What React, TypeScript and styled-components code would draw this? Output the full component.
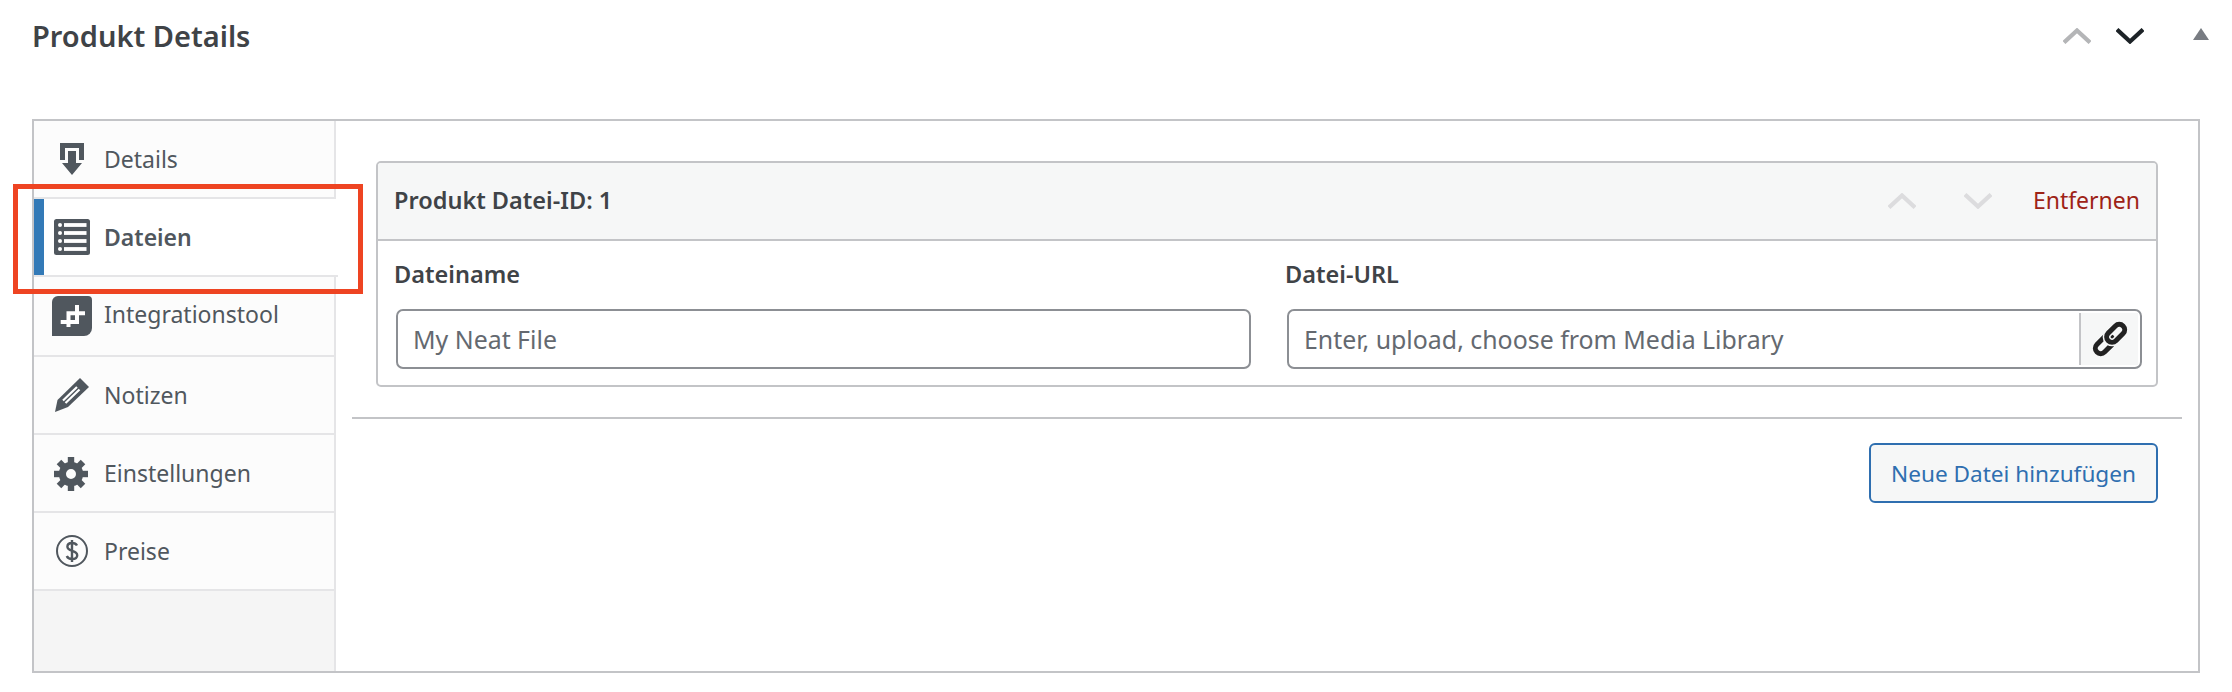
import React from "react";
import styled, { createGlobalStyle } from "styled-components";

const Global = createGlobalStyle`
  * { box-sizing: border-box; }
  html, body { margin: 0; padding: 0; background: #fff; }
  body { font-family: "Noto Sans", "Open Sans", sans-serif; }
`;

const Page = styled.div`
  position: relative;
  width: 2232px;
  height: 692px;
  padding: 0 32px;
  overflow: hidden;
`;

const TitleBar = styled.header`
  display: flex;
  align-items: center;
  height: 119px;
  padding-bottom: 47px;
  margin-right: -9px;
`;

const Title = styled.h2`
  flex: 1;
  margin: 0;
  font-size: 29px;
  font-weight: 600;
  color: #3f4347;
  line-height: 72px;
`;

const ChevronSvg = styled.svg<{ $tone: string }>`
  display: block;
  width: 28px;
  height: 16px;
  fill: none;
  stroke: ${(p) => p.$tone};
  stroke-width: 4.2;
`;

const Chevron = ({ up, tone }: { up?: boolean; tone: string }) => (
  <ChevronSvg $tone={tone} viewBox="0 0 28 16">
    <polyline points={up ? "1,14.5 14,2.5 27,14.5" : "1,1.5 14,13.5 27,1.5"} />
  </ChevronSvg>
);

const TitleControls = styled.div`
  display: flex;
  align-items: flex-start;
  gap: 25px;
`;

const Triangle = styled.span`
  display: block;
  width: 0;
  height: 0;
  margin-left: 24px;
  border-left: 8px solid transparent;
  border-right: 8px solid transparent;
  border-bottom: 12px solid #787c82;
`;

const Box = styled.section`
  display: flex;
  height: 554px;
  border: 2px solid #c3c4c7;
`;

const Sidebar = styled.nav`
  flex: 0 0 302px;
  min-width: 0;
  margin: 0;
  background: #f5f5f5;
  border-right: 2px solid #e5e5e7;
`;

const Tab = styled.div<{ $active?: boolean; $tall?: boolean }>`
  position: relative;
  display: flex;
  align-items: center;
  height: ${(p) => (p.$tall ? 80 : 78)}px;
  width: ${(p) => (p.$active ? 304 : 300)}px;
  padding-left: 16px;
  gap: 10px;
  background: ${(p) => (p.$active ? "#fff" : "#fcfcfc")};
  border-bottom: 2px solid #e5e5e7;
  font-size: 23px;
  font-weight: ${(p) => (p.$active ? 600 : 400)};
  color: #50575e;
  &::before {
    content: "";
    display: ${(p) => (p.$active ? "block" : "none")};
    position: absolute;
    left: 0;
    top: 0;
    bottom: 0;
    width: 10px;
    background: #337ab7;
  }
`;

const TabLabel = styled.span<{ $lift?: boolean }>`
  margin-bottom: ${(p) => (p.$lift ? 5 : 0)}px;
`;

const IconSvg = styled.svg`
  display: block;
  flex: none;
  width: 44px;
  height: 44px;
  fill: #50575e;
`;

const DetailsIcon = () => (
  <IconSvg viewBox="0 0 44 44">
    <path d="M10 6H34V23H29V11H15V23H10Z" />
    <path d="M18 14H26V26H32L22 38L12 26H18Z" />
  </IconSvg>
);

const FilesIcon = () => (
  <IconSvg viewBox="0 0 44 44">
    <rect x="4" y="4" width="36" height="36" rx="2.5" />
    {[10, 18, 26, 34].map((y) => (
      <g key={y} fill="#fff">
        <circle cx="10" cy={y} r="2" />
        <rect x="14" y={y - 1.9} width="22.5" height="3.8" />
      </g>
    ))}
  </IconSvg>
);

const IntegrationIcon = () => (
  <IconSvg viewBox="0 0 44 44">
    <path d="M8 2H38A4 4 0 0 1 42 6V34A8 8 0 0 1 34 42H2V8A6 6 0 0 1 8 2Z" />
    <path
      d="M10.7 28H29M18.5 17.5V33M16.5 19.3H35M27 11V30"
      fill="none"
      stroke="#fff"
      strokeWidth="4"
    />
  </IconSvg>
);

const PencilIcon = () => (
  <IconSvg viewBox="0 0 44 44">
    <path d="M5 39L7.5 27L30 5L39 14L18 34Z" />
    <path
      d="M13 27.5L27 14M15.5 30L29.5 16.5"
      fill="none"
      stroke="#fff"
      strokeWidth="2.2"
    />
  </IconSvg>
);

const GearIcon = () => (
  <IconSvg viewBox="0 0 44 44">
    <circle cx="21" cy="23" r="8.6" fill="none" stroke="#50575e" strokeWidth="7.2" />
    {[0, 45, 90, 135, 180, 225, 270, 315].map((a) => (
      <rect key={a} x="17.8" y="6" width="6.4" height="7" transform={`rotate(${a} 21 23)`} />
    ))}
  </IconSvg>
);

const DollarIcon = () => (
  <IconSvg viewBox="0 0 44 44">
    <circle cx="22" cy="22" r="15" fill="none" stroke="#50575e" strokeWidth="2" />
    <path
      d="M27 16.5C26 14.6 24.2 14 22 14C19.2 14 17.4 15.6 17.4 17.8C17.4 23 27.2 20.8 27.2 26.2C27.2 28.6 25 30 22 30C19.4 30 17.6 29 16.8 27M22 11V33"
      fill="none"
      stroke="#50575e"
      strokeWidth="2.4"
    />
  </IconSvg>
);

const Main = styled.main`
  flex: 1;
  min-width: 0;
  display: flex;
  flex-direction: column;
  padding: 40px 16px 0;
`;

const Panel = styled.div`
  margin: 0 24px;
  height: 226px;
  border: 2px solid #c3c4c7;
  border-radius: 5px;
  overflow: hidden;
`;

const PanelHeader = styled.div`
  display: flex;
  align-items: center;
  height: 78px;
  padding: 0 16px;
  background: #f6f7f7;
  border-bottom: 2px solid #c3c4c7;
`;

const PanelTitle = styled.div`
  flex: 1;
  font-size: 23.5px;
  font-weight: 600;
  color: #3f4347;
  margin-bottom: 2px;
`;

const PanelControls = styled.div`
  display: flex;
  align-items: center;
  gap: 48px;
  margin-right: 41px;
`;

const RemoveLink = styled.a`
  font-size: 23px;
  color: #9e2316;
  margin-bottom: 2px;
`;

const Fields = styled.div`
  display: grid;
  grid-template-columns: 856px 856px;
  gap: 35px;
  padding: 16px 14px 0 17px;
`;

const Field = styled.div`
  display: flex;
  flex-direction: column;
`;

const FieldLabel = styled.label`
  height: 52px;
  margin-left: -1px;
  font-size: 23.5px;
  font-weight: 600;
  line-height: 34px;
  color: #3f4347;
`;

const InputShell = styled.div`
  display: flex;
  align-items: stretch;
  height: 60px;
  margin-left: 1px;
  padding: 2px;
  border: 2px solid #8c8f94;
  border-radius: 7px;
  background: #fff;
`;

const TextInput = styled.input`
  flex: 1;
  min-width: 0;
  padding: 0 13px;
  border: 0;
  outline: 0;
  background: transparent;
  font-family: inherit;
  font-size: 24.9px;
  color: #50575e;
  &::placeholder {
    color: #646970;
    opacity: 1;
  }
`;

const LinkButton = styled.button`
  flex: none;
  display: flex;
  align-items: center;
  justify-content: center;
  width: 59px;
  padding: 0;
  border: 0;
  border-left: 2px solid #c3c4c7;
  background: #f6f7f7;
`;

const LinkSvg = styled.svg`
  display: block;
  width: 36px;
  height: 36px;
  fill: none;
`;

const LinkIcon = () => (
  <LinkSvg viewBox="0 0 36 36">
    <g transform="rotate(-45 18 18)" strokeWidth="5">
      <rect x="-0.5" y="12.6" width="21" height="10.8" rx="5.4" stroke="#222" />
      <rect x="15.5" y="12.6" width="21" height="10.8" rx="5.4" stroke="#f6f7f7" strokeWidth="8" />
      <rect x="15.5" y="12.6" width="21" height="10.8" rx="5.4" stroke="#222" />
    </g>
  </LinkSvg>
);

const Divider = styled.hr`
  margin: 30px 0 24px;
  height: 2px;
  border: 0;
  background: #c3c4c7;
`;

const AddRow = styled.div`
  display: flex;
  justify-content: flex-end;
  padding-right: 24px;
`;

const AddButton = styled.button`
  height: 60px;
  width: 289px;
  padding: 0;
  border: 2px solid #2f6fb0;
  border-radius: 6px;
  background: #f6f7f7;
  font-family: inherit;
  font-size: 22.6px;
  color: #2f6fb0;
`;

const Highlight = styled.div`
  position: absolute;
  left: 13px;
  top: 184px;
  width: 350px;
  height: 110px;
  border: 5px solid #ee4422;
  pointer-events: none;
`;

export default function App() {
  return (
    <Page>
      <Global />
      <TitleBar>
        <Title>Produkt Details</Title>
        <TitleControls>
          <Chevron up tone="#b4b5b7" />
          <Chevron tone="#1d2327" />
          <Triangle />
        </TitleControls>
      </TitleBar>
      <Box>
        <Sidebar>
          <Tab><DetailsIcon /><TabLabel>Details</TabLabel></Tab>
          <Tab $active><FilesIcon /><TabLabel>Dateien</TabLabel></Tab>
          <Tab $tall><IntegrationIcon /><TabLabel $lift>Integrationstool</TabLabel></Tab>
          <Tab><PencilIcon /><TabLabel>Notizen</TabLabel></Tab>
          <Tab><GearIcon /><TabLabel>Einstellungen</TabLabel></Tab>
          <Tab><DollarIcon /><TabLabel>Preise</TabLabel></Tab>
        </Sidebar>
        <Main>
          <Panel>
            <PanelHeader>
              <PanelTitle>Produkt Datei-ID: 1</PanelTitle>
              <PanelControls>
                <Chevron up tone="#dcdcde" />
                <Chevron tone="#dcdcde" />
              </PanelControls>
              <RemoveLink>Entfernen</RemoveLink>
            </PanelHeader>
            <Fields>
              <Field>
                <FieldLabel>Dateiname</FieldLabel>
                <InputShell>
                  <TextInput placeholder="My Neat File" />
                </InputShell>
              </Field>
              <Field>
                <FieldLabel>Datei-URL</FieldLabel>
                <InputShell>
                  <TextInput placeholder="Enter, upload, choose from Media Library" />
                  <LinkButton aria-label="Link"><LinkIcon /></LinkButton>
                </InputShell>
              </Field>
            </Fields>
          </Panel>
          <Divider />
          <AddRow>
            <AddButton>Neue Datei hinzufügen</AddButton>
          </AddRow>
        </Main>
      </Box>
      <Highlight />
    </Page>
  );
}
